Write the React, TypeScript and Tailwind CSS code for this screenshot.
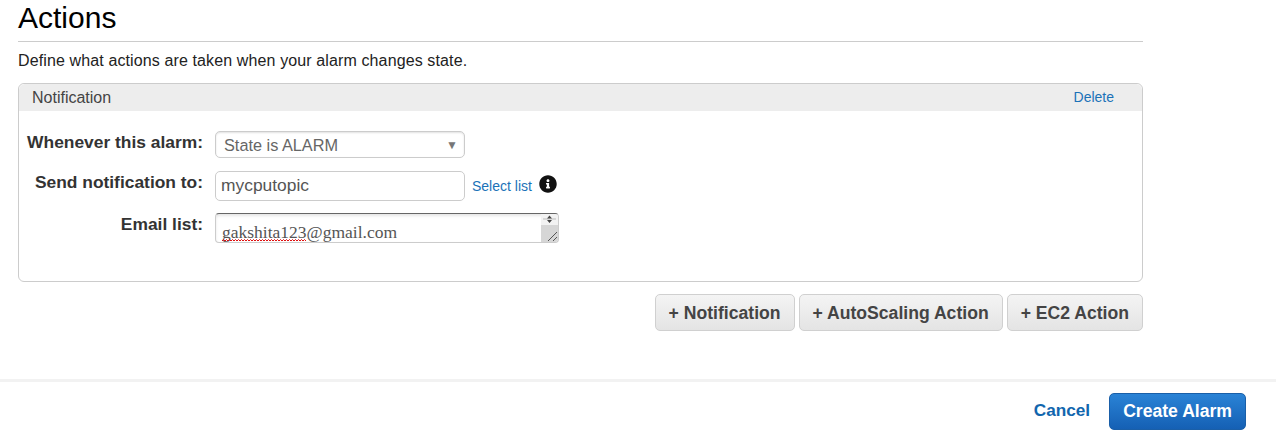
import { FaInfoCircle } from 'react-icons/fa';

function FieldRow({ label, className, children }: { label: string; className?: string; children: React.ReactNode }) {
  return (
    <div className={`flex items-start ${className ?? ''}`}>
      <label className="w-[184px] text-right text-[17.4px] leading-[22px] font-bold whitespace-nowrap text-[#333]">{label}</label>
      <div className="ml-[12px] flex items-start">{children}</div>
    </div>
  );
}

function ActionButton({ label }: { label: string }) {
  return (
    <button className="h-[37px] rounded-[5px] border border-[#d0d0d0] bg-gradient-to-b from-[#f4f4f4] to-[#e4e4e4] px-[13px] pt-[1px] text-[17.6px] font-bold whitespace-nowrap text-[#444]">
      {label}
    </button>
  );
}

export default function App() {
  return (
    <div className="flex h-[436px] w-[1276px] flex-col overflow-hidden bg-white font-['Liberation_Sans',Arial,sans-serif]">
      <div className="ml-[18px] w-[1125px]">
        <h1 className="h-[42px] border-b border-[#ccc] text-[30px] leading-[36px] font-normal text-black">Actions</h1>
        <p className="mt-[9px] text-[16px] leading-[20px] tracking-[0.12px] text-[#222]">Define what actions are taken when your alarm changes state.</p>

        <div className="mt-[12px] h-[199px] rounded-[6px] border border-[#ccc]">
          <div className="flex h-[27px] items-center justify-between rounded-t-[6px] bg-[#ededed] pr-[28px] pl-[13px]">
            <span className="text-[16px] text-[#444]">Notification</span>
            <a className="text-[14px] text-[#1b72b8]">Delete</a>
          </div>

          <FieldRow label="Whenever this alarm:" className="mt-[20px]">
            <div className="flex h-[27px] w-[250px] items-center justify-between rounded-[5px] border border-[#ccc] pt-[1px] pr-[6px] pl-[8px] text-[16.3px] text-[#666] shadow-[inset_0_1px_2px_rgba(0,0,0,0.12)]">
              <span>State is ALARM</span>
              <span className="text-[12px] text-[#777]">▼</span>
            </div>
          </FieldRow>

          <FieldRow label="Send notification to:" className="mt-[13px]">
            <div className="flex h-[30px] w-[250px] items-center rounded-[5px] border border-[#ccc] pb-[1px] pl-[5px] text-[17.4px] text-[#555]">mycputopic</div>
            <a className="mt-[6px] ml-[7px] text-[14px] leading-[18px] text-[#1b72b8]">Select list</a>
            <FaInfoCircle className="mt-[4px] ml-[7px] h-[18px] w-[18px] text-[#111]" />
          </FieldRow>

          <FieldRow label="Email list:" className="mt-[12px]">
            <div className="relative h-[30px] w-[344px] overflow-hidden rounded-[4px] border border-[#ccc] border-t-[#666] pt-[8px] pl-[6px] font-['Liberation_Serif',serif] text-[17.5px] leading-[20px] text-[#555] shadow-[inset_0_2px_3px_rgba(0,0,0,0.1)]">
              gakshita123@gmail.com
              <svg className="absolute bottom-0 left-[6px]" width="84" height="3" viewBox="0 0 84 3">
                <path
                  d="M0 2 L1.5 0.5 L3 2 L4.5 0.5 L6 2 L7.5 0.5 L9 2 L10.5 0.5 L12 2 L13.5 0.5 L15 2 L16.5 0.5 L18 2 L19.5 0.5 L21 2 L22.5 0.5 L24 2 L25.5 0.5 L27 2 L28.5 0.5 L30 2 L31.5 0.5 L33 2 L34.5 0.5 L36 2 L37.5 0.5 L39 2 L40.5 0.5 L42 2 L43.5 0.5 L45 2 L46.5 0.5 L48 2 L49.5 0.5 L51 2 L52.5 0.5 L54 2 L55.5 0.5 L57 2 L58.5 0.5 L60 2 L61.5 0.5 L63 2 L64.5 0.5 L66 2 L67.5 0.5 L69 2 L70.5 0.5 L72 2 L73.5 0.5 L75 2 L76.5 0.5 L78 2 L79.5 0.5 L81 2 L82.5 0.5 L84 2"
                  fill="none"
                  stroke="#e01010"
                  strokeWidth="1"
                />
              </svg>
              <div className="absolute top-0 right-0 flex h-full w-[17px] flex-col">
                <svg className="bg-[#f2f2f2]" width="17" height="11" viewBox="0 0 17 11">
                  <path d="M2 5 H15" stroke="#bbb" strokeWidth="1" />
                  <path d="M8.5 1.5 L11 4.5 L6 4.5 Z M6 6 L11 6 L8.5 9 Z" fill="#444" />
                </svg>
                <div className="relative flex-1 bg-[#d6d6d6]">
                  <svg className="absolute right-0 bottom-0" width="12" height="12" viewBox="0 0 12 12">
                    <path d="M2 11 L11 2 M7 11 L11 7" stroke="#555" strokeWidth="1" />
                  </svg>
                </div>
              </div>
            </div>
          </FieldRow>
        </div>

        <div className="mt-[12px] flex justify-end gap-[4px]">
          <ActionButton label="+ Notification" />
          <ActionButton label="+ AutoScaling Action" />
          <ActionButton label="+ EC2 Action" />
        </div>
      </div>

      <div className="mt-[48px] flex flex-1 items-start justify-end gap-[19px] border-t-[3px] border-[#f2f2f2] pt-[11px] pr-[30px]">
        <a className="mt-[5px] text-[17.2px] font-bold text-[#1166ae]">Cancel</a>
        <button className="h-[37px] rounded-[5px] border border-[#1a5fa8] bg-gradient-to-b from-[#2a83d6] to-[#1560b4] px-[13px] text-[17.6px] font-bold whitespace-nowrap text-white">
          Create Alarm
        </button>
      </div>
    </div>
  );
}
